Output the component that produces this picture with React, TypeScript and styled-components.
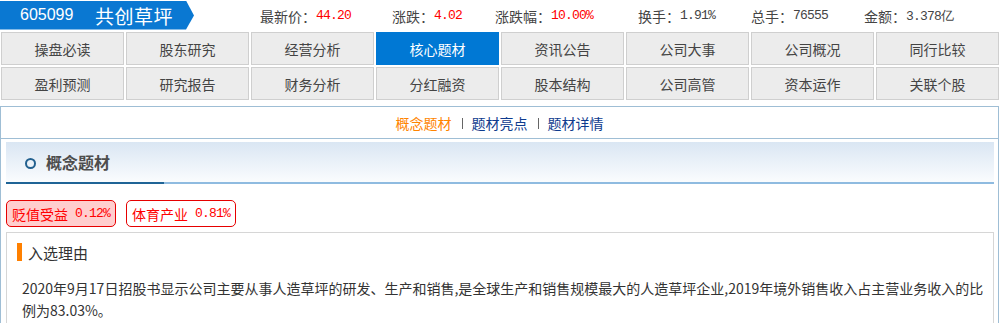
import React from "react";
import styled, { createGlobalStyle } from "styled-components";

const Global = createGlobalStyle`
  html, body { margin: 0; padding: 0; background: #fff; }
  body {
    font-family: "Noto Sans CJK SC", "Liberation Sans", sans-serif;
    font-size: 14px;
    color: #333;
  }
  * { box-sizing: border-box; }
`;

const Page = styled.div`
  width: 1000px;
`;

const TopBar = styled.div`
  display: flex;
  align-items: center;
  height: 30px;
`;

const Banner = styled.div`
  width: 194px;
  height: 29px;
  flex: none;
  background: #0a78d2;
  clip-path: polygon(0 0, 186px 0, 194px 15px, 186px 29px, 0 29px);
  display: flex;
  align-items: center;
  color: #fff;
  padding-left: 20px;
`;

const Code = styled.span`
  font-family: "Liberation Sans", sans-serif;
  font-size: 16px;
  width: 75px;
`;

const Name = styled.span`
  font-size: 19px;
  letter-spacing: 0.5px;
`;

const Stats = styled.div`
  display: flex;
  align-items: center;
  margin-left: 66px;
  padding-top: 1px;
`;

const Stat = styled.div<{ $w?: number }>`
  width: ${(p) => (p.$w ? `${p.$w}px` : "auto")};
  flex: none;
  display: flex;
  align-items: center;
  color: #444;
  font-size: 14px;
  white-space: nowrap;
`;

const StatValue = styled.span<{ $red?: boolean }>`
  font-family: "Liberation Mono", monospace;
  font-size: 13px;
  letter-spacing: -0.8px;
  color: ${(p) => (p.$red ? "#ff0000" : "#444")};
`;

const TabGrid = styled.div`
  display: grid;
  grid-template-columns: repeat(8, 123px);
  column-gap: 2px;
  row-gap: 2px;
  padding-left: 1px;
  margin-top: 2px;
  margin-bottom: 6px;
`;

const Tab = styled.div<{ $active?: boolean }>`
  height: 33px;
  border: 1px solid ${(p) => (p.$active ? "#0078d4" : "#cfcfcf")};
  background: ${(p) => (p.$active ? "#0078d4" : "#ececec")};
  color: ${(p) => (p.$active ? "#fff" : "#444")};
  font-size: 14px;
  display: flex;
  align-items: center;
  justify-content: center;
`;

const Panel = styled.div`
  width: 999px;
  border: 1px solid #9fbed5;
  border-bottom: none;
  min-height: 230px;
`;

const SubNav = styled.div`
  height: 32px;
  border-bottom: 1px solid #9fbed5;
  display: flex;
  align-items: center;
  justify-content: center;
  font-size: 14px;
  padding-top: 1px;
`;

const SubLink = styled.span<{ $active?: boolean }>`
  color: ${(p) => (p.$active ? "#ff8400" : "#0e3b8e")};
`;

const Sep = styled.span`
  width: 1px;
  height: 11px;
  background: #666;
  margin: 0 9px 0 10px;
`;

const Body = styled.div`
  padding: 3px 4px 0 5px;
`;

const SectionHead = styled.div`
  display: flex;
  flex-direction: column;
`;

const HeadBar = styled.div`
  height: 40px;
  background: linear-gradient(to bottom, #dae6f3, #fafcfe);
  display: flex;
  align-items: center;
  padding-left: 19px;
`;

const Ring = styled.span`
  width: 11px;
  height: 11px;
  border: 2px solid #22608f;
  border-radius: 50%;
  margin-right: 10px;
  margin-top: 2px;
`;

const HeadTitle = styled.span`
  font-size: 16px;
  font-weight: bold;
  color: #4d4d4d;
`;

const HeadRule = styled.div`
  height: 2px;
  background: linear-gradient(to right, #1f6496 158px, #8fbbe0 158px);
`;

const TagRow = styled.div`
  display: flex;
  gap: 10px;
  margin-top: 16px;
`;

const Tag = styled.span<{ $filled?: boolean }>`
  height: 27px;
  width: 110px;
  display: inline-flex;
  align-items: center;
  justify-content: center;
  border: 1px solid #e60000;
  border-radius: 5px;
  background: ${(p) => (p.$filled ? "#ffcece" : "#fff")};
  color: #ff0000;
  font-size: 14px;
  white-space: nowrap;
`;

const TagNum = styled.span`
  font-family: "Liberation Mono", monospace;
  font-size: 13px;
  letter-spacing: -0.8px;
  margin-left: 7px;
`;

const ReasonBox = styled.div`
  margin-top: 5px;
  border: 1px solid #d6d6d6;
  padding: 10px 4px 20px 0;
`;

const ReasonTitle = styled.div`
  display: flex;
  align-items: center;
  margin-left: 10px;
  height: 18px;
  font-size: 15px;
  color: #333;
`;

const OrangeBar = styled.span`
  width: 5px;
  height: 18px;
  background: #ff8000;
  margin-right: 6px;
`;

const Para = styled.p`
  margin: 16px 0 0;
  padding-left: 15px;
  font-size: 14px;
  line-height: 22px;
  color: #333;
`;

const stats = [
  { label: "最新价：", value: "44.20", red: true, w: 132 },
  { label: "涨跌：", value: "4.02", red: true, w: 103 },
  { label: "涨跌幅：", value: "10.00%", red: true, w: 143 },
  { label: "换手：", value: "1.91%", red: false, w: 113 },
  { label: "总手：", value: "76555", red: false, w: 113 },
  { label: "金额：", value: "3.378亿", red: false },
];

const tabs = [
  "操盘必读", "股东研究", "经营分析", "核心题材", "资讯公告", "公司大事", "公司概况", "同行比较",
  "盈利预测", "研究报告", "财务分析", "分红融资", "股本结构", "公司高管", "资本运作", "关联个股",
];

export default function App() {
  return (
    <Page>
      <Global />
      <TopBar>
        <Banner>
          <Code>605099</Code>
          <Name>共创草坪</Name>
        </Banner>
        <Stats>
          {stats.map((s) => (
            <Stat key={s.label} $w={s.w}>
              {s.label}
              <StatValue $red={s.red}>{s.value}</StatValue>
            </Stat>
          ))}
        </Stats>
      </TopBar>
      <TabGrid>
        {tabs.map((t) => (
          <Tab key={t} $active={t === "核心题材"}>
            {t}
          </Tab>
        ))}
      </TabGrid>
      <Panel>
        <SubNav>
          <SubLink $active>概念题材</SubLink>
          <Sep />
          <SubLink>题材亮点</SubLink>
          <Sep />
          <SubLink>题材详情</SubLink>
        </SubNav>
        <Body>
          <SectionHead>
            <HeadBar>
              <Ring />
              <HeadTitle>概念题材</HeadTitle>
            </HeadBar>
            <HeadRule />
          </SectionHead>
          <TagRow>
            <Tag $filled>
              贬值受益<TagNum>0.12%</TagNum>
            </Tag>
            <Tag>
              体育产业<TagNum>0.81%</TagNum>
            </Tag>
          </TagRow>
          <ReasonBox>
            <ReasonTitle>
              <OrangeBar />
              入选理由
            </ReasonTitle>
            <Para>
              2020年9月17日招股书显示公司主要从事人造草坪的研发、生产和销售,是全球生产和销售规模最大的人造草坪企业,2019年境外销售收入占主营业务收入的比例为83.03%。
            </Para>
          </ReasonBox>
        </Body>
      </Panel>
    </Page>
  );
}
